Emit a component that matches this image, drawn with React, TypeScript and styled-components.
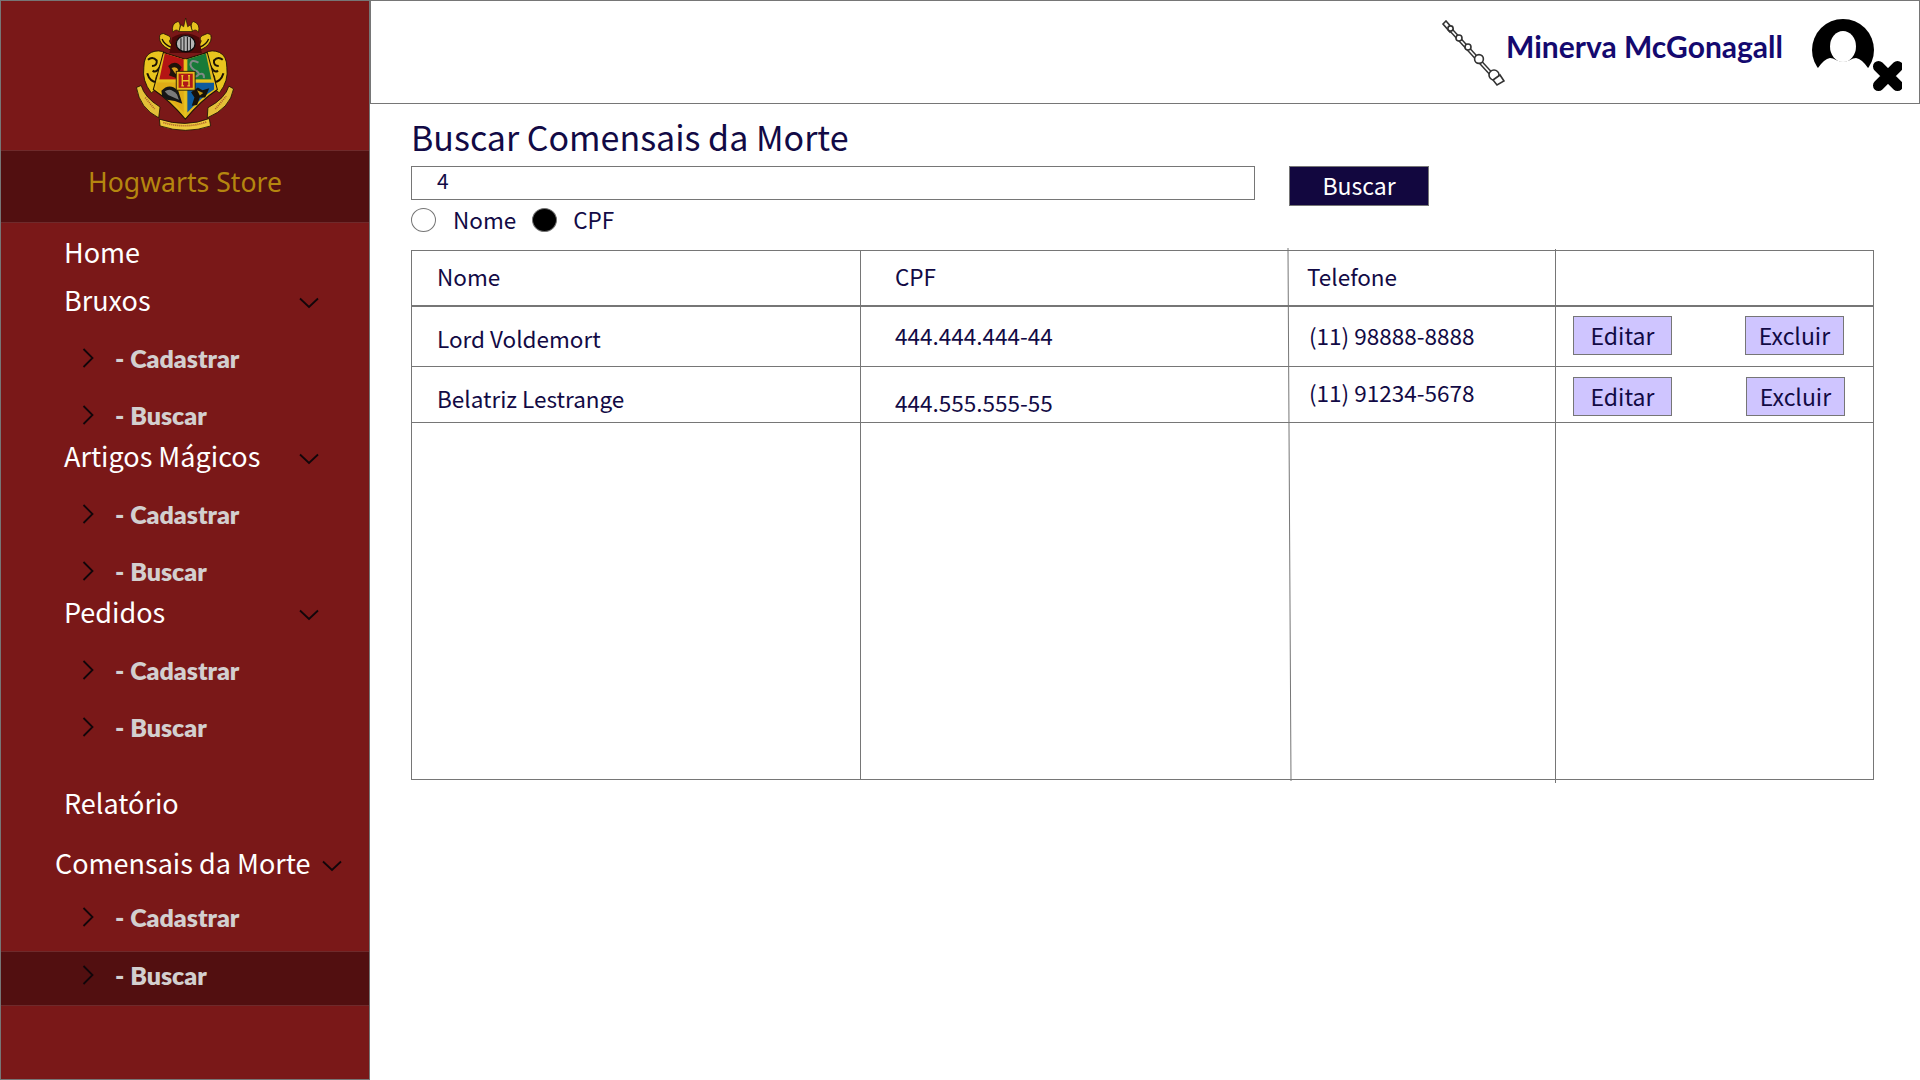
import React, { FC } from "react";
import styled, { createGlobalStyle } from "styled-components";

const SOURCE = `"Noto Sans CJK SC", "Noto Sans", sans-serif`;
const GEO = `Lato, "Liberation Sans", sans-serif`;
const LINE = "#767676";

const Global = createGlobalStyle`
  html, body { margin: 0; padding: 0; background: #fff; }
  * { box-sizing: border-box; }
`;

const Page = styled.div`
  display: flex;
  width: 1920px;
  height: 1080px;
  overflow: hidden;
  font-family: ${SOURCE};
`;

const Sidebar = styled.aside`
  width: 370px;
  height: 1080px;
  flex: none;
  background: #7a1818;
  border: 1px solid ${LINE};
  display: flex;
  flex-direction: column;
`;

const LogoBox = styled.div`
  height: 149px;
  flex: none;
  display: flex;
  justify-content: center;
  padding-top: 15px;
`;

const StoreBar = styled.div`
  height: 73px;
  flex: none;
  padding-bottom: 10px;
  background: #520f10;
  border-top: 1px solid #6f2a2b;
  border-bottom: 1px solid #6f2a2b;
  color: #b5860f;
  font-family: "Noto Sans", sans-serif;
  font-size: 26.6px;
  display: flex;
  align-items: center;
  justify-content: center;
`;

const Nav = styled.nav`
  padding-top: 13px;
  display: flex;
  flex-direction: column;
`;

const NavTitle = styled.div<{ $left?: number; $top?: number }>`
  height: 34px;
  margin-top: ${(p) => p.$top ?? 0}px;
  padding-left: ${(p) => p.$left ?? 63}px;
  display: flex;
  align-items: center;
  color: #fff;
  font-size: 27px;
  white-space: nowrap;
  span {
    padding-bottom: 3px;
  }
  svg {
    margin-top: 4px;
  }
`;

const TitleLabel = styled.span<{ $width?: number }>`
  display: inline-block;
  width: ${(p) => (p.$width ? `${p.$width}px` : "auto")};
`;

const SubList = styled.div<{ $top?: number }>`
  display: flex;
  flex-direction: column;
  gap: 9px;
  padding-top: ${(p) => p.$top ?? 17}px;
`;

const SubRow = styled.div<{ $active?: boolean }>`
  height: ${(p) => (p.$active ? 55 : 48)}px;
  padding-left: 81px;
  padding-bottom: ${(p) => (p.$active ? 8 : 2)}px;
  display: flex;
  align-items: center;
  gap: 21px;
  color: #d3cfcf;
  font-family: ${GEO};
  font-weight: 800;
  font-size: 25px;
  background: ${(p) => (p.$active ? "#520f10" : "transparent")};
  border-top: ${(p) => (p.$active ? "1px solid #6f2a2b" : "0")};
  border-bottom: ${(p) => (p.$active ? "1px solid #6f2a2b" : "0")};
`;

const Main = styled.main`
  flex: 1;
  min-width: 0;
  display: flex;
  flex-direction: column;
`;

const TopBar = styled.header`
  height: 104px;
  flex: none;
  border: 1px solid ${LINE};
  display: flex;
  align-items: flex-start;
  justify-content: flex-end;
  padding: 17px 17px 0 0;
`;

const UserName = styled.div`
  margin: 10px 29px 0 1px;
  font-family: ${GEO};
  font-size: 30px;
  font-weight: 700;
  color: #14096f;
  white-space: nowrap;
`;

const Content = styled.div`
  padding: 11px 0 0 41px;
  color: #120a45;
`;

const Heading = styled.h1`
  margin: 0;
  height: 51px;
  font-size: 34px;
  font-weight: 400;
  line-height: 44px;
`;

const SearchRow = styled.div`
  display: flex;
  align-items: flex-start;
  gap: 34px;
`;

const SearchInput = styled.div`
  width: 844px;
  height: 34px;
  border: 1px solid ${LINE};
  padding-left: 25px;
  font-size: 21px;
  line-height: 26px;
`;

const SearchButton = styled.button`
  width: 140px;
  height: 40px;
  background: #12073f;
  border: 1px solid ${LINE};
  color: #fff;
  font-family: ${SOURCE};
  font-size: 23px;
  padding: 0 0 2px;
`;

const RadioRow = styled.div`
  display: flex;
  align-items: center;
  height: 26px;
  font-size: 22.5px;
`;

const Radio = styled.span<{ $checked?: boolean }>`
  width: 25px;
  height: 24px;
  margin-top: 2px;
  border-radius: 50%;
  border: 1px solid ${LINE};
  background: ${(p) => (p.$checked ? "#000" : "#fff")};
  margin-right: ${(p) => (p.$checked ? 16 : 17)}px;
`;

const RadioLabel = styled.span`
  margin-right: 16px;
`;

const Table = styled.div`
  position: relative;
  width: 1463px;
  height: 530px;
  margin-top: 18px;
  border: 1px solid ${LINE};
  display: grid;
  grid-template-columns: 449px 428px 267px 1fr;
  grid-template-rows: 56px 60px 56px 1fr;
  font-size: 22.5px;
`;

const Cell = styled.div<{ $indent?: number; $nudge?: number; $head?: boolean; $last?: boolean; $noRule?: boolean; $end?: boolean }>`
  display: flex;
  align-items: center;
  padding-left: ${(p) => p.$indent ?? 0}px;
  padding-top: ${(p) => Math.max(p.$nudge ?? 0, 0)}px;
  padding-bottom: ${(p) => Math.max(-(p.$nudge ?? 0), 0)}px;
  border-right: ${(p) => (p.$last || p.$noRule ? "0" : `1px solid ${LINE}`)};
  border-bottom: ${(p) => (p.$end ? "0" : p.$head ? `2px solid ${LINE}` : `1px solid ${LINE}`)};
`;

const Actions = styled(Cell)`
  gap: 73px;
  padding-left: 17px;
`;

const ActionButton = styled.button<{ $shift?: number }>`
  width: 99px;
  height: 39px;
  margin-left: ${(p) => p.$shift ?? 0}px;
  background: #cfc5ff;
  border: 1px solid ${LINE};
  color: #120a45;
  font-family: ${SOURCE};
  font-size: 23px;
  padding: 0 0 2px;
`;

/* the hand-drawn column rule: leans 3px and overshoots the table a little */
const Rule = styled.svg<{ $left: number }>`
  position: absolute;
  left: ${(p) => p.$left}px;
  top: -4px;
  pointer-events: none;
`;

const ChevronDown: FC = () => (
  <svg width="20" height="12" viewBox="0 0 20 12" fill="none" stroke="#12060a" strokeWidth="1.8">
    <path d="M1 1.5 L10 10 L19 1.5" />
  </svg>
);

const ChevronRight: FC = () => (
  <svg width="12" height="20" viewBox="0 0 12 20" fill="none" stroke="#12060a" strokeWidth="1.8">
    <path d="M1.5 1 L10.5 10 L1.5 19" />
  </svg>
);

const Wand: FC = () => (
  <svg width="64" height="68" viewBox="0 0 64 68" fill="#fff" stroke="#333" strokeWidth="1.6" style={{ marginTop: 2 }}>
    <path d="M2 4 L5 1 L12 9 L9 12 Z" />
    <path d="M10 10 L54 58" strokeWidth="4.5" />
    <path d="M10 10 L54 58" stroke="#fff" strokeWidth="1.6" />
    <circle cx="9.5" cy="8.5" r="2.6" />
    <circle cx="18" cy="18" r="3" />
    <circle cx="27" cy="27" r="3" />
    <circle cx="38" cy="39" r="4.4" />
    <circle cx="53" cy="55" r="5" />
    <path d="M55 61 L62 56 L66 62 L59 66 Z" transform="translate(-3 -1)" />
  </svg>
);

const Avatar: FC = () => (
  <svg width="90" height="72" viewBox="0 0 90 72" style={{ marginTop: 1 }}>
    <circle cx="31" cy="31" r="31" fill="#000" />
    <path d="M6 49 Q12 40 18 39 Q21 39 24 41 Q31 44 38 41 Q41 39 44 39 Q50 40 56 49 L60 66 L2 66 Z" fill="#fff" />
    <ellipse cx="31" cy="27.5" rx="13" ry="15.5" fill="#fff" />
    <path d="M66.5 47.5 L85.5 66.5 M85.5 47.5 L66.5 66.5" stroke="#000" strokeWidth="11" strokeLinecap="round" />
  </svg>
);

// left half of the crest's gold scrollwork, mirrored for the right
const Mantle: FC = () => (
  <>
    <path
      d="M132 72 Q116 72 122 94 Q130 114 162 124 L178 118 Q152 108 150 94 Q158 84 146 78 Z"
      fill="#e8c41e"
      stroke="#1c1204"
      strokeWidth="2.5"
    />
    <path
      d="M96 128 Q74 138 74 172 Q68 212 96 248 L114 234 Q104 214 112 196 L130 172 L140 130 Q118 118 96 128 Z"
      fill="#e8c41e"
      stroke="#1c1204"
      strokeWidth="2.5"
    />
    <path
      d="M86 150 Q100 138 112 152 Q114 168 98 168 M84 190 Q92 216 112 216 M100 182 Q112 192 124 166"
      fill="none"
      stroke="#1c1204"
      strokeWidth="6"
    />
    <path d="M128 88 Q134 104 154 112" fill="none" stroke="#1c1204" strokeWidth="4" />
  </>
);

const Crest: FC = () => (
  <svg width="100" height="116" viewBox="48 20 296 344">
    <Mantle />
    <g transform="matrix(-1 0 0 1 394 0)">
      <Mantle />
    </g>
    {/* crest and crown */}
    <path d="M160 68 Q154 42 176 36 Q186 44 178 66 Q170 56 160 68 Z" fill="#e6c21e" stroke="#1c1204" strokeWidth="2" />
    <path d="M236 68 Q242 42 220 36 Q210 44 218 66 Q226 56 236 68 Z" fill="#e6c21e" stroke="#1c1204" strokeWidth="2" />
    <path d="M178 66 L184 46 L192 52 L198 26 L204 52 L212 46 L218 66 Z" fill="#edc820" stroke="#1c1204" strokeWidth="2" />
    <path d="M158 84 Q198 60 238 84 L246 130 L150 130 Z" fill="#4d0808" />
    {/* helmet */}
    <ellipse cx="198" cy="102" rx="28" ry="24" fill="#b4b4b4" stroke="#0a0a0a" strokeWidth="4" />
    <path d="M184 86 V120 M193 82 V124 M203 82 V124 M212 86 V120" stroke="#141414" strokeWidth="3" />
    {/* shield */}
    <path d="M132 128 L197 148 L262 128 L292 238 Q244 270 197 326 Q150 270 102 238 Z" fill="#e3b91e" stroke="#1c1204" strokeWidth="3" />
    <path d="M136 131 L192 148 V208 H120 Z" fill="#b41414" />
    <path d="M203 148 L258 131 L274 208 H203 Z" fill="#177a38" />
    <path d="M112 218 H192 V306 Q150 262 112 238 Z" fill="#e0ad16" />
    <path d="M203 218 H282 V238 Q244 262 203 306 Z" fill="#0d5b9e" />
    <path d="M146 168 Q168 148 186 172 L170 204 L148 196 Q158 184 146 168 Z" fill="#20130a" />
    <path d="M156 174 Q172 168 176 180 L168 192 Z" fill="#d99e1a" />
    <path d="M236 158 Q214 146 212 164 Q214 176 232 184 Q244 196 226 200 M232 196 Q254 184 252 204" fill="none" stroke="#7f8a86" strokeWidth="6" />
    <path d="M126 242 Q150 216 176 242 L188 280 L166 272 L142 268 L128 258 Z" fill="#161616" />
    <path d="M136 244 Q152 230 172 252 L178 268 L146 254 Z" fill="#7a7a7a" />
    <path d="M214 246 L234 232 L248 240 L268 234 L256 262 L240 262 L232 284 L216 286 L224 262 Z" fill="#16110a" />
    <path d="M232 240 L250 248 L240 256 Z" fill="#c79818" />
    <path d="M194 148 H200 V320 H194 Z" fill="#e6c21e" />
    <path d="M112 209 H282 V215 H112 Z" fill="#e6c21e" />
    {/* H plate */}
    <rect x="170" y="184" width="56" height="56" fill="#e6b81e" stroke="#1c1204" strokeWidth="2.5" />
    <rect x="177" y="191" width="42" height="42" fill="#b01818" />
    <path d="M185 197 H191 M205 197 H211 M185 227 H193 M203 227 H211 M188 197 V227 M208 197 V227 M188 212 H208" stroke="#ecc424" strokeWidth="4" fill="none" />
    {/* ribbon */}
    <path d="M52 232 L66 226 Q76 262 122 290 L118 322 Q62 294 52 232 Z" fill="#e3c038" stroke="#1c1204" strokeWidth="2.5" />
    <path d="M340 236 L326 228 Q316 264 264 292 L262 322 Q330 294 340 236 Z" fill="#e3c038" stroke="#1c1204" strokeWidth="2.5" />
    <path d="M120 326 Q198 352 268 324 L272 346 Q198 372 122 346 Z" fill="#edc93c" stroke="#1c1204" strokeWidth="2.5" />
    <path d="M78 262 L106 296 M286 296 L318 258 M132 336 Q198 356 260 334" stroke="#a8552a" strokeWidth="5" strokeDasharray="3 3" fill="none" />
  </svg>
);

type Item = { label: string; active?: boolean };

const SubItem: FC<Item> = ({ label, active }) => (
  <SubRow $active={active}>
    <ChevronRight />
    <div>- {label}</div>
  </SubRow>
);

const Group: FC<{ title: string }> = ({ title }) => (
  <>
    <NavTitle>
      <TitleLabel $width={235}>{title}</TitleLabel>
      <ChevronDown />
    </NavTitle>
    <SubList>
      <SubItem label="Cadastrar" />
      <SubItem label="Buscar" />
    </SubList>
  </>
);

const rows = [
  { nome: "Lord Voldemort", nomeNudge: 2, cpf: "444.444.444-44", cpfNudge: -4, tel: "(11) 98888-8888", telNudge: -4, btnNudge: -2, shift: 0 },
  { nome: "Belatriz Lestrange", nomeNudge: 7, cpf: "444.555.555-55", cpfNudge: 14, tel: "(11) 91234-5678", telNudge: -5, btnNudge: 4, shift: 1 },
];

const App: FC = () => (
  <Page>
    <Global />
    <Sidebar>
      <LogoBox>
        <Crest />
      </LogoBox>
      <StoreBar>Hogwarts Store</StoreBar>
      <Nav>
        <NavTitle><span>Home</span></NavTitle>
        <NavTitle $top={14}>
          <TitleLabel $width={235}>Bruxos</TitleLabel>
          <ChevronDown />
        </NavTitle>
        <SubList>
          <SubItem label="Cadastrar" />
          <SubItem label="Buscar" />
        </SubList>
        <Group title="Artigos Mágicos" />
        <Group title="Pedidos" />
        <NavTitle $top={35}><span>Relatório</span></NavTitle>
        <NavTitle $top={26} $left={54}>
          <TitleLabel $width={267}>Comensais da Morte</TitleLabel>
          <ChevronDown />
        </NavTitle>
        <SubList $top={13}>
          <SubItem label="Cadastrar" />
          <SubItem label="Buscar" active />
        </SubList>
      </Nav>
    </Sidebar>
    <Main>
      <TopBar>
        <Wand />
        <UserName>Minerva McGonagall</UserName>
        <Avatar />
      </TopBar>
      <Content>
        <Heading>Buscar Comensais da Morte</Heading>
        <SearchRow>
          <SearchInput>4</SearchInput>
          <SearchButton>Buscar</SearchButton>
        </SearchRow>
        <RadioRow>
          <Radio />
          <RadioLabel>Nome</RadioLabel>
          <Radio $checked />
          <span>CPF</span>
        </RadioRow>
        <Table>
          <Cell $head $indent={25} $nudge={-5}>Nome</Cell>
          <Cell $head $indent={34} $noRule $nudge={-5}>CPF</Cell>
          <Cell $head $indent={18} $nudge={-5}>Telefone</Cell>
          <Cell $head $last />
          {rows.map((r) => (
            <React.Fragment key={r.nome}>
              <Cell $indent={25} $nudge={r.nomeNudge}>{r.nome}</Cell>
              <Cell $indent={34} $nudge={r.cpfNudge} $noRule>{r.cpf}</Cell>
              <Cell $indent={20} $nudge={r.telNudge}>{r.tel}</Cell>
              <Actions $last $nudge={r.btnNudge}>
                <ActionButton>Editar</ActionButton>
                <ActionButton $shift={r.shift}>Excluir</ActionButton>
              </Actions>
            </React.Fragment>
          ))}
          <Cell $end />
          <Cell $end $noRule />
          <Cell $end />
          <Cell $end $last />
          <Rule $left={875} width="6" height="536">
            <path d="M1 1 L4 534" stroke={LINE} strokeWidth="1" fill="none" />
          </Rule>
          <Rule $left={1143} width="2" height="537">
            <path d="M0.5 2 V536" stroke={LINE} strokeWidth="1" fill="none" />
          </Rule>
        </Table>
      </Content>
    </Main>
  </Page>
);

export default App;
